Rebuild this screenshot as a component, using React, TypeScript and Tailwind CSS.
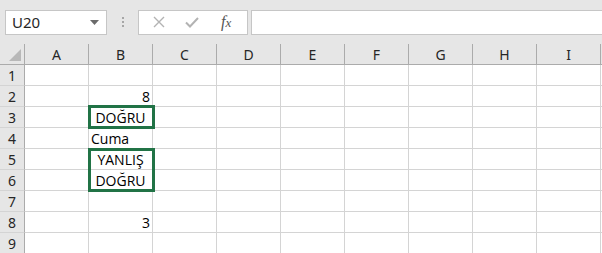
const COLS = ['A', 'B', 'C', 'D', 'E', 'F', 'G', 'H', 'I'];
const ROWS = [1, 2, 3, 4, 5, 6, 7, 8, 9];

type Cell = { text: string; align: 'left' | 'center' | 'right' };

const DATA: Record<string, Cell> = {
  B2: { text: '8', align: 'right' },
  B3: { text: 'DOĞRU', align: 'center' },
  B4: { text: 'Cuma', align: 'left' },
  B5: { text: 'YANLIŞ', align: 'center' },
  B6: { text: 'DOĞRU', align: 'center' },
  B8: { text: '3', align: 'right' },
};

const cellFont = { fontFamily: '"Open Sans", "Liberation Sans", Arial, sans-serif' };
const uiFont = { fontFamily: '"Noto Sans", "Open Sans", Arial, sans-serif' };

function FormulaBar() {
  return (
    <div className="flex items-center h-[44px] pt-[10px] pb-[10px] bg-[#e6e6e6]">
      {/* Name box */}
      <div className="ml-[5px] w-[102px] h-[25px] bg-white border border-[#c6c6c6] flex items-center justify-between pl-[6px] pr-[6px]">
        <span className="text-[15px] text-[#262626]" style={uiFont}>
          U20
        </span>
        <svg width="9" height="5" viewBox="0 0 9 5" className="mr-[1px]">
          <path d="M0 0 H9 L4.5 5 Z" fill="#6b6b6b" />
        </svg>
      </div>

      {/* grip dots */}
      <div className="w-[31px] flex flex-col items-center gap-[2px]">
        <span className="w-[2px] h-[2px] bg-[#a6a6a6]" />
        <span className="w-[2px] h-[2px] bg-[#a6a6a6]" />
        <span className="w-[2px] h-[2px] bg-[#a6a6a6]" />
      </div>

      {/* cancel / enter / fx */}
      <div className="w-[110px] h-[25px] bg-white border border-[#c6c6c6] flex items-center">
        <svg width="12" height="12" viewBox="0 0 12 12" className="ml-[14px]">
          <path d="M1 1 L11 11 M11 1 L1 11" stroke="#b3b3b3" strokeWidth="1.4" />
        </svg>
        <svg width="14" height="12" viewBox="0 0 14 12" className="ml-[20px]">
          <path d="M1 6.5 L5 10.5 L13 2" stroke="#b3b3b3" strokeWidth="2" fill="none" />
        </svg>
        <span
          className="ml-[22px] text-[16px] italic text-[#555] leading-none"
          style={{ fontFamily: '"Liberation Serif", "Times New Roman", serif' }}
        >
          f<span className="text-[13px]">x</span>
        </span>
      </div>

      {/* formula input */}
      <div className="ml-[3px] flex-1 h-[25px] bg-white border-y border-l border-[#c6c6c6]" />
    </div>
  );
}

function Sheet() {
  return (
    <div className="grid grid-cols-[25px_repeat(9,64px)_1fr] bg-white">
      {/* header row */}
      <div className="h-[21px] bg-[#e6e6e6] border-r border-b border-[#ababab] relative">
        <svg width="12" height="12" viewBox="0 0 12 12" className="absolute right-[3px] bottom-[3px]">
          <path d="M12 0 L12 12 L0 12 Z" fill="#b8b8b8" />
        </svg>
      </div>
      {COLS.map((c) => (
        <div
          key={c}
          className="h-[21px] bg-[#e6e6e6] border-r border-b border-[#ababab] flex items-center justify-center text-[14px] text-[#262626]"
          style={uiFont}
        >
          {c}
        </div>
      ))}
      <div className="h-[21px] bg-[#e6e6e6] border-b border-[#ababab]" />

      {ROWS.map((r) => (
        <RowCells key={r} row={r} />
      ))}
    </div>
  );
}

function RowCells({ row }: { row: number }) {
  return (
    <>
      <div
        className="h-[21px] bg-[#e6e6e6] border-r border-b border-r-[#ababab] border-b-[#d4d4d4] flex items-center justify-center text-[14px] text-[#262626]"
        style={uiFont}
      >
        {row}
      </div>
      {COLS.map((c) => {
        const key = `${c}${row}`;
        const cell = DATA[key];
        return (
          <div
            key={key}
            className={`h-[21px] border-r border-b border-[#d4d4d4] relative flex items-center px-[2px] text-[14px] text-black ${
              cell?.align === 'right' ? 'justify-end' : cell?.align === 'center' ? 'justify-center' : 'justify-start'
            }`}
            style={cellFont}
          >
            {cell?.text}
            {key === 'B3' && (
              <div className="absolute z-10 left-[-1px] top-[-2px] w-[67px] h-[24px] border-[3px] border-[#217346]" />
            )}
            {key === 'B5' && (
              <div className="absolute z-10 left-[-1px] top-[-1px] w-[67px] h-[44px] border-[3px] border-[#217346]" />
            )}
          </div>
        );
      })}
      <div className="h-[21px] border-b border-[#d4d4d4]" />
    </>
  );
}

export default function App() {
  return (
    <div className="w-[602px] h-[253px] overflow-hidden bg-white">
      <FormulaBar />
      <Sheet />
    </div>
  );
}
